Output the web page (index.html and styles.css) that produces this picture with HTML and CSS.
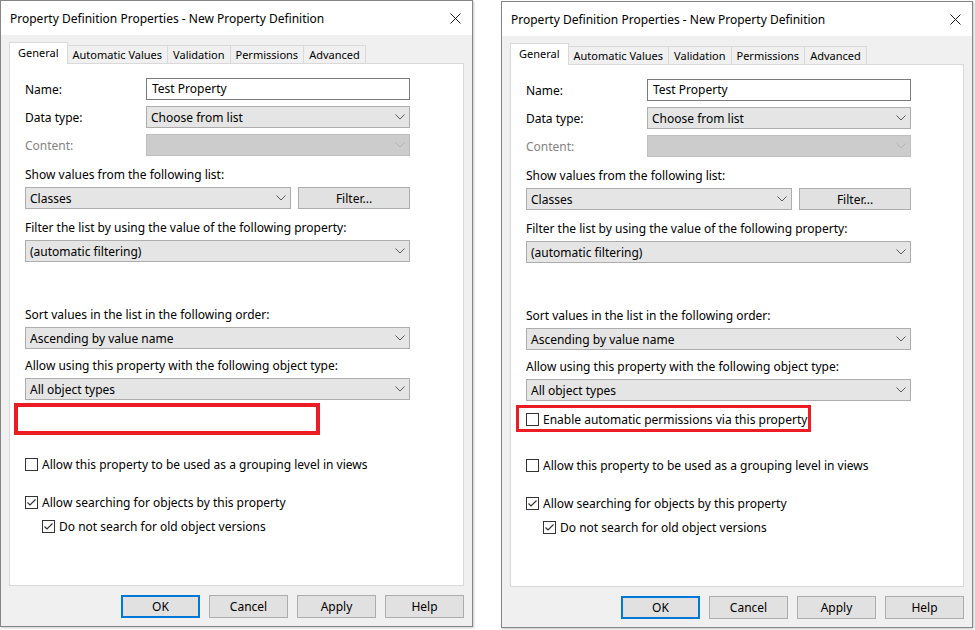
FILE: index.html
```html
<!DOCTYPE html>
<html lang="en">
<head>
<meta charset="utf-8">
<title>Property Definition Properties</title>
<link rel="stylesheet" href="styles.css">
</head>
<body>
<main class="desk">

  <!-- Dialog before the permissions option -->
  <section class="dlg">
    <header class="titlebar">
      <span class="title">Property Definition Properties - New Property Definition</span>
      <svg class="close" viewBox="0 0 11 11"><path d="M0.5 0.5L10.5 10.5M10.5 0.5L0.5 10.5"/></svg>
    </header>
    <div class="dlg-body">
      <nav class="tabs">
        <span class="tab on">General</span>
        <span class="tab">Automatic Values</span>
        <span class="tab">Validation</span>
        <span class="tab">Permissions</span>
        <span class="tab">Advanced</span>
      </nav>
      <div class="panel">
        <div class="pair"><span class="lbl">Name:</span><div class="edit">Test Property</div></div>
        <div class="pair"><span class="lbl">Data type:</span><div class="combo"><span>Choose from list</span><svg class="chev" viewBox="0 0 10 6"><path d="M0.5 0.5L5 5L9.5 0.5"/></svg></div></div>
        <div class="pair off"><span class="lbl">Content:</span><div class="combo dis"><span></span><svg class="chev" viewBox="0 0 10 6"><path d="M0.5 0.5L5 5L9.5 0.5"/></svg></div></div>

        <p class="cap">Show values from the following list:</p>
        <div class="split">
          <div class="combo short"><span>Classes</span><svg class="chev" viewBox="0 0 10 6"><path d="M0.5 0.5L5 5L9.5 0.5"/></svg></div>
          <button class="btn filter">Filter...</button>
        </div>

        <p class="cap">Filter the list by using the value of the following property:</p>
        <div class="combo"><span>(automatic filtering)</span><svg class="chev" viewBox="0 0 10 6"><path d="M0.5 0.5L5 5L9.5 0.5"/></svg></div>

        <p class="cap far">Sort values in the list in the following order:</p>
        <div class="combo"><span>Ascending by value name</span><svg class="chev" viewBox="0 0 10 6"><path d="M0.5 0.5L5 5L9.5 0.5"/></svg></div>

        <p class="cap near">Allow using this property with the following object type:</p>
        <div class="combo"><span>All object types</span><svg class="chev" viewBox="0 0 10 6"><path d="M0.5 0.5L5 5L9.5 0.5"/></svg></div>

        <div class="mark mark-empty"></div>

        <label class="check first"><span class="box"></span>Allow this property to be used as a grouping level in views</label>
        <label class="check second"><span class="box"><svg viewBox="0 0 11 11"><path d="M1.5 5.5L4 8L9.5 2.5"/></svg></span>Allow searching for objects by this property</label>
        <label class="check third sub"><span class="box"><svg viewBox="0 0 11 11"><path d="M1.5 5.5L4 8L9.5 2.5"/></svg></span>Do not search for old object versions</label>
      </div>
      <div class="buttons">
        <button class="btn default">OK</button>
        <button class="btn">Cancel</button>
        <button class="btn">Apply</button>
        <button class="btn">Help</button>
      </div>
    </div>
  </section>

  <!-- Dialog with the permissions option -->
  <section class="dlg dlg-b">
    <header class="titlebar">
      <span class="title">Property Definition Properties - New Property Definition</span>
      <svg class="close" viewBox="0 0 11 11"><path d="M0.5 0.5L10.5 10.5M10.5 0.5L0.5 10.5"/></svg>
    </header>
    <div class="dlg-body">
      <nav class="tabs">
        <span class="tab on">General</span>
        <span class="tab">Automatic Values</span>
        <span class="tab">Validation</span>
        <span class="tab">Permissions</span>
        <span class="tab">Advanced</span>
      </nav>
      <div class="panel">
        <div class="pair"><span class="lbl">Name:</span><div class="edit">Test Property</div></div>
        <div class="pair"><span class="lbl">Data type:</span><div class="combo"><span>Choose from list</span><svg class="chev" viewBox="0 0 10 6"><path d="M0.5 0.5L5 5L9.5 0.5"/></svg></div></div>
        <div class="pair off"><span class="lbl">Content:</span><div class="combo dis"><span></span><svg class="chev" viewBox="0 0 10 6"><path d="M0.5 0.5L5 5L9.5 0.5"/></svg></div></div>

        <p class="cap">Show values from the following list:</p>
        <div class="split">
          <div class="combo short"><span>Classes</span><svg class="chev" viewBox="0 0 10 6"><path d="M0.5 0.5L5 5L9.5 0.5"/></svg></div>
          <button class="btn filter">Filter...</button>
        </div>

        <p class="cap">Filter the list by using the value of the following property:</p>
        <div class="combo"><span>(automatic filtering)</span><svg class="chev" viewBox="0 0 10 6"><path d="M0.5 0.5L5 5L9.5 0.5"/></svg></div>

        <p class="cap far">Sort values in the list in the following order:</p>
        <div class="combo"><span>Ascending by value name</span><svg class="chev" viewBox="0 0 10 6"><path d="M0.5 0.5L5 5L9.5 0.5"/></svg></div>

        <p class="cap near">Allow using this property with the following object type:</p>
        <div class="combo"><span>All object types</span><svg class="chev" viewBox="0 0 10 6"><path d="M0.5 0.5L5 5L9.5 0.5"/></svg></div>

        <div class="mark mark-option">
          <label class="check"><span class="box"></span>Enable automatic permissions via this property</label>
        </div>

        <label class="check first"><span class="box"></span>Allow this property to be used as a grouping level in views</label>
        <label class="check second"><span class="box"><svg viewBox="0 0 11 11"><path d="M1.5 5.5L4 8L9.5 2.5"/></svg></span>Allow searching for objects by this property</label>
        <label class="check third sub"><span class="box"><svg viewBox="0 0 11 11"><path d="M1.5 5.5L4 8L9.5 2.5"/></svg></span>Do not search for old object versions</label>
      </div>
      <div class="buttons">
        <button class="btn default">OK</button>
        <button class="btn">Cancel</button>
        <button class="btn">Apply</button>
        <button class="btn">Help</button>
      </div>
    </div>
  </section>

</main>
</body>
</html>
```

FILE: styles.css
```css
* {
  box-sizing: border-box;
}

html,
body {
  margin: 0;
  background: #ffffff;
}

body {
  font-family: "Noto Sans", "Open Sans", sans-serif;
  font-size: 12px;
  color: #000000;
}

.desk {
  display: flex;
  gap: 28px;
  width: 975px;
  height: 630px;
  overflow: hidden;
}

/* Window frame */
.dlg {
  flex: none;
  width: 473px;
  height: 627px;
  border: 1px solid #868686;
  background: #f0f0f0;
  display: flex;
  flex-direction: column;
  box-shadow: 1px 1px 2px rgba(0, 0, 0, 0.22);
}

.dlg-b {
  width: 472px;
  height: 627px;
  margin-top: 1px;
}

.titlebar {
  flex: none;
  height: 34px;
  background: #ffffff;
  display: flex;
  align-items: center;
  justify-content: space-between;
  padding: 0 11px 0 9px;
}

.close {
  width: 11px;
  height: 11px;
  fill: none;
  stroke: #1a1a1a;
  stroke-width: 1;
}

.dlg-body {
  flex: 1;
  padding: 7px 8px 0;
  display: flex;
  flex-direction: column;
}

/* Tab strip */
.tabs {
  position: relative;
  z-index: 2;
  height: 21px;
  display: flex;
  align-items: flex-end;
  font-size: 11px;
}

.tab {
  height: 18px;
  line-height: 17px;
  padding: 0 5px;
  margin-left: -1px;
  border: 1px solid #d9d9d9;
  border-bottom: 0;
  background: #f0f0f0;
  white-space: nowrap;
}

.tab:first-child {
  margin-left: 0;
}

.tab.on {
  height: 22px;
  line-height: 20px;
  margin-bottom: -1px;
  padding: 0 8px;
  background: #ffffff;
}

.panel {
  position: relative;
  z-index: 1;
  flex: none;
  height: 523px;
  background: #ffffff;
  border: 1px solid #d9d9d9;
  padding: 14px 0 0 15px;
}

/* Form rows */
.pair {
  display: grid;
  grid-template-columns: 121px 264px;
  align-items: center;
  height: 22px;
}

.pair + .pair {
  margin-top: 6px;
}

.pair.off .lbl {
  color: #838383;
}

.edit {
  height: 22px;
  line-height: 20px;
  border: 1px solid #7a7a7a;
  background: #ffffff;
  padding-left: 5px;
}

.combo {
  width: 385px;
  height: 22px;
  border: 1px solid #adadad;
  background: #e5e5e5;
  display: flex;
  align-items: center;
  justify-content: space-between;
  padding: 0 4px 0 4px;
}

.pair .combo {
  width: 264px;
}

.combo.dis {
  background: #cccccc;
  border-color: #bfbfbf;
}

.chev {
  width: 10px;
  height: 6px;
  fill: none;
  stroke: #5a5a5a;
  stroke-width: 1;
}

.combo.dis .chev {
  stroke: #b3b3b3;
}

.cap {
  margin: 11px 0 4px;
  line-height: 16px;
  height: 16px;
  white-space: nowrap;
}

.cap.far {
  margin-top: 45px;
}

.cap.near {
  margin-top: 9px;
}

.split {
  width: 385px;
  display: flex;
  justify-content: space-between;
}

.combo.short {
  width: 266px;
}

/* Buttons */
.btn {
  font: inherit;
  color: #000000;
  height: 23px;
  width: 79px;
  padding: 0;
  background: #e1e1e1;
  border: 1px solid #adadad;
}

.btn.filter {
  width: 112px;
  height: 22px;
}

.btn.default {
  border-color: #0078d7;
  box-shadow: inset 0 0 0 1px #0078d7;
}

.buttons {
  display: flex;
  justify-content: flex-end;
  gap: 9px;
  margin-top: 9px;
}

/* Check boxes */
.check {
  display: flex;
  align-items: center;
  gap: 4px;
  height: 16px;
  white-space: nowrap;
}

.check.first {
  margin-top: 21px;
}

.check.second {
  margin-top: 22px;
}

.check.third {
  margin-top: 8px;
}

.check.sub {
  padding-left: 17px;
}

.box {
  flex: none;
  width: 13px;
  height: 13px;
  border: 1px solid #333333;
  background: #ffffff;
  display: flex;
}

.box svg {
  width: 11px;
  height: 11px;
  fill: none;
  stroke: #333333;
  stroke-width: 1.2;
}

/* Red highlight frames */
.mark {
  border-style: solid;
  border-color: #ed1c24;
}

.mark-empty {
  margin: 3px 0 0 -11px;
  width: 306px;
  height: 32px;
  border-width: 4px;
}

.mark-empty + .check.first {
  margin-top: 21px;
}

.mark-option {
  margin: 4px 0 0 -10px;
  width: 295px;
  height: 27px;
  border-width: 3px;
  padding: 3px 0 0 7px;
  display: flex;
  align-items: flex-start;
}

.mark-option + .check.first {
  margin-top: 25px;
}
```
